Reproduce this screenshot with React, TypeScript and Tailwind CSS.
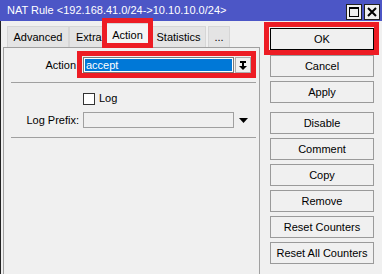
import React from "react";

function Btn({ label, extra = "" }: { label: string; extra?: string }) {
  return (
    <div
      className={`h-[22px] w-[104px] flex items-center justify-center border border-[#9a9a9a] bg-[#f0f0f0] ${extra}`}
    >
      {label}
    </div>
  );
}

function Tab({ label, w, extra = "" }: { label: string; w: string; extra?: string }) {
  return (
    <div
      className={`h-[21px] flex items-center justify-center border border-b-0 border-[#d6d6d6] bg-[#e4e4e4] overflow-hidden whitespace-nowrap ${w} ${extra}`}
    >
      {label}
    </div>
  );
}

export default function App() {
  return (
    <div className="w-[382px] h-[274px] bg-[#f0f0f0] overflow-hidden text-[11px] leading-[13px] text-black font-['Liberation_Sans',Arial,sans-serif]">
      {/* Title bar */}
      <div className="h-[21px] bg-[#4c56c6] flex items-start">
        <div className="flex-1 pl-[7px] pt-[4px] text-white whitespace-nowrap">
          NAT Rule &lt;192.168.41.0/24-&gt;10.10.10.0/24&gt;
        </div>
        <div className="mt-[4px] mr-[2px] flex gap-[2px]">
          <div className="w-[16px] h-[16px] bg-[#f0f0f0] border border-[#202020] flex items-center justify-center">
            <svg width="10" height="10" viewBox="0 0 10 10">
              <rect x="0.5" y="0.5" width="9" height="9" fill="none" stroke="#000" strokeWidth="1" />
              <rect x="0" y="0" width="10" height="2" fill="#000" />
            </svg>
          </div>
          <div className="w-[16px] h-[16px] bg-[#f0f0f0] border border-[#202020] flex items-center justify-center">
            <svg width="10" height="10" viewBox="0 0 10 10">
              <path d="M1 1 L9 9 M9 1 L1 9" stroke="#000" strokeWidth="2" />
            </svg>
          </div>
        </div>
      </div>

      {/* Body */}
      <div className="flex h-[253px] border-l border-[#222222]">
        {/* Left part */}
        <div className="w-[259px] flex flex-col">
          {/* Tabs */}
          <div className="h-[26px] flex items-end pl-[6px]">
            <Tab label="Advanced" w="w-[62px]" />
            <Tab label="Extra" w="w-[35px]" extra="justify-start pl-[6px]" />
            <div className="relative h-[24px] w-[47px] flex items-center justify-center bg-[#f4f4f4] border border-b-0 border-[#d6d6d6]">
              Action
              <div className="absolute left-[-3px] right-[-3px] top-[-6px] bottom-[-1px] border-[5px] border-[#ed1c24]" />
            </div>
            <Tab label="Statistics" w="w-[55px]" />
            <Tab label="..." w="w-[22px]" extra="ml-[2px]" />
          </div>

          {/* Panel */}
          <div className="flex-1 ml-[2px] border-l border-r border-t border-[#a0a0a0] flex flex-col">
            {/* Action row */}
            <div className="mt-[9px] h-[16px] flex items-center">
              <div className="w-[72px] text-right">Action</div>
              <div className="relative ml-[7px] flex items-center">
                <div className="w-[151px] h-[16px] border border-[#7a7a7a] bg-white p-[1px]">
                  <div className="h-full bg-[#0078d7] text-white pl-[1px] leading-[12px]">accept</div>
                </div>
                <div className="ml-[1px] w-[16px] h-[16px] border border-[#adadad] bg-[#f0f0f0] flex items-center justify-center">
                  <svg width="8" height="9" viewBox="0 0 8 9">
                    <rect x="1" y="0" width="6" height="2" fill="#000" />
                    <rect x="3" y="2" width="2" height="3" fill="#000" />
                    <path d="M0 5 L8 5 L4 9 Z" fill="#000" />
                  </svg>
                </div>
                <div className="absolute left-[-6px] right-[-5px] top-[-6px] bottom-[-5px] border-[5px] border-[#ed1c24]" />
              </div>
            </div>

            <div className="mt-[9px] ml-[7px] mr-[3px] h-px bg-[#a0a0a0]" />

            {/* Log row */}
            <div className="mt-[9px] flex items-center">
              <div className="ml-[79px] w-[12px] h-[12px] border border-[#333333] bg-white" />
              <div className="ml-[4px]">Log</div>
            </div>

            {/* Log prefix row */}
            <div className="mt-[7px] h-[16px] flex items-center">
              <div className="w-[75px] text-right whitespace-nowrap">Log Prefix:</div>
              <div className="ml-[4px] w-[151px] h-[16px] border border-[#a0a0a0] bg-[#f0f0f0]" />
              <svg className="ml-[5px]" width="9" height="5" viewBox="0 0 9 5">
                <path d="M0 0 L9 0 L4.5 5 Z" fill="#000" />
              </svg>
            </div>

            <div className="mt-[9px] ml-[7px] mr-[3px] h-px bg-[#a0a0a0]" />
          </div>
        </div>

        {/* Right buttons */}
        <div className="flex flex-col pl-[10px] pt-[7px]">
          <div className="relative">
            <Btn label="OK" extra="border-black" />
            <div className="absolute left-[-6px] right-[-5px] top-[-6px] bottom-[-5px] border-[5px] border-[#ed1c24]" />
          </div>
          <Btn label="Cancel" extra="mt-[5px]" />
          <Btn label="Apply" extra="mt-[4px]" />
          <Btn label="Disable" extra="mt-[9px]" />
          <Btn label="Comment" extra="mt-[4px]" />
          <Btn label="Copy" extra="mt-[4px]" />
          <Btn label="Remove" extra="mt-[4px]" />
          <Btn label="Reset Counters" extra="mt-[4px]" />
          <Btn label="Reset All Counters" extra="mt-[4px]" />
        </div>
      </div>
    </div>
  );
}
